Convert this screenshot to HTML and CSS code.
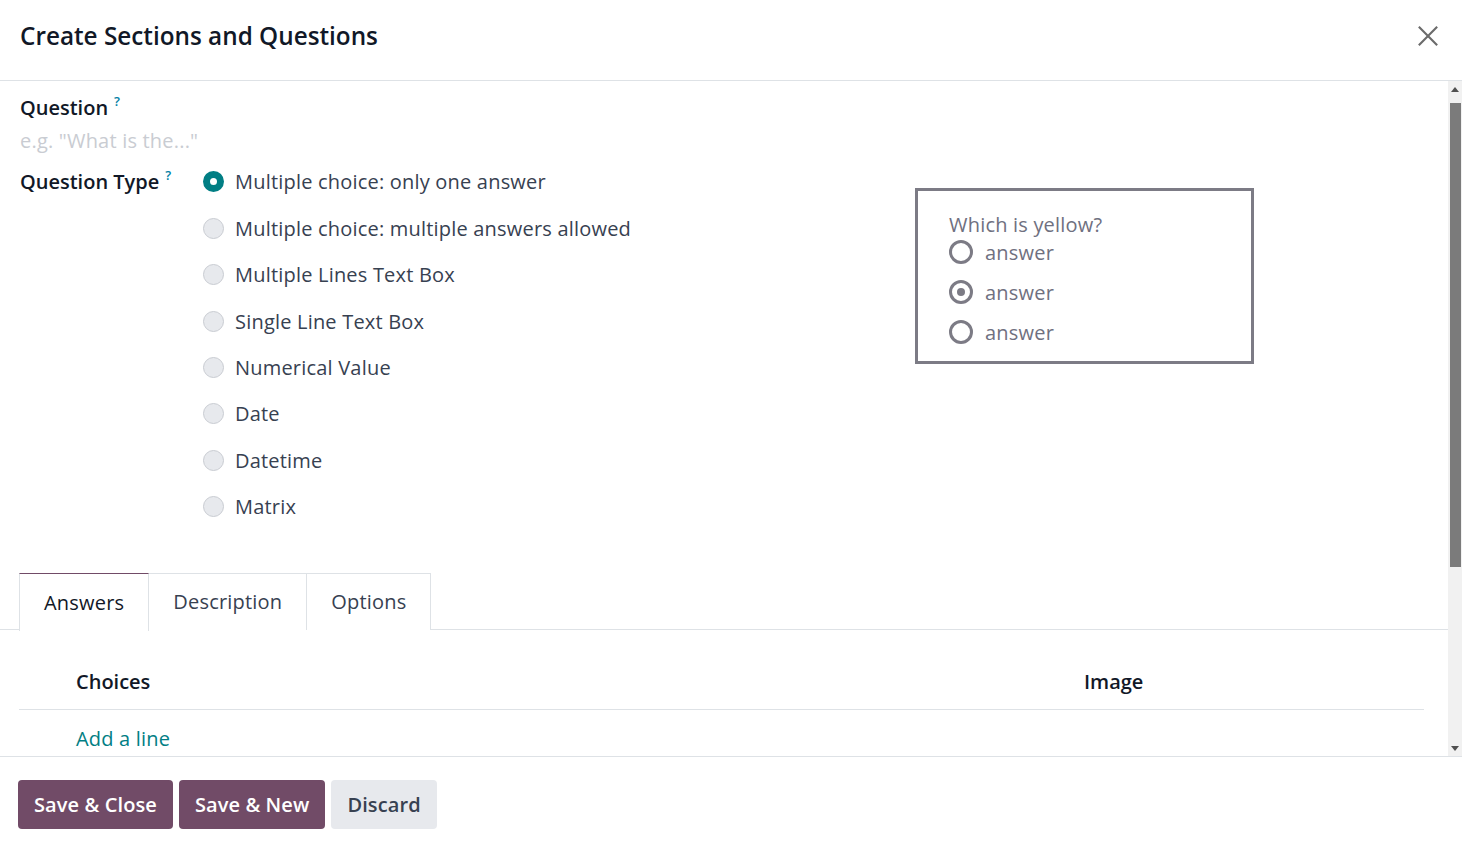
FILE: index.html
```html
<!DOCTYPE html>
<html>
<head>
<meta charset="utf-8">
<link rel="stylesheet" href="styles.css">
</head>
<body>
<div class="modal">
  <header class="modal-header">
    <h1 class="title">Create Sections and Questions</h1>
    <button class="close" aria-label="Close">
      <svg width="22" height="22" viewBox="0 0 24 24"><path d="M2 2 L22 22 M22 2 L2 22" stroke="#6b6b6b" stroke-width="2.3" fill="none"/></svg>
    </button>
  </header>
  <main class="modal-body">
    <div class="body-content">
      <div class="section">
        <div class="label">Question<sup class="help">?</sup></div>
        <div class="placeholder">e.g. "What is the..."</div>
        <div class="type-row">
          <div class="type-left">
            <div class="label type-label">Question Type<sup class="help">?</sup></div>
            <ul class="radios">
              <li><span class="radio checked"></span>Multiple choice: only one answer</li>
              <li><span class="radio"></span>Multiple choice: multiple answers allowed</li>
              <li><span class="radio"></span>Multiple Lines Text Box</li>
              <li><span class="radio"></span>Single Line Text Box</li>
              <li><span class="radio"></span>Numerical Value</li>
              <li><span class="radio"></span>Date</li>
              <li><span class="radio"></span>Datetime</li>
              <li><span class="radio"></span>Matrix</li>
            </ul>
          </div>
          <div class="preview">
            <div class="preview-q">Which is yellow?</div>
            <div class="preview-a first"><span class="pradio"></span>answer</div>
            <div class="preview-a"><span class="pradio on"></span>answer</div>
            <div class="preview-a"><span class="pradio"></span>answer</div>
          </div>
        </div>
      </div>
      <nav class="tabs">
        <div class="tab active">Answers</div>
        <div class="tab">Description</div>
        <div class="tab">Options</div>
      </nav>
      <div class="table">
        <div class="thead">
          <div class="col-handle"></div>
          <div class="col-choice">Choices</div>
          <div class="col-image">Image</div>
        </div>
        <div class="trow">
          <div class="col-handle"></div>
          <a class="add-line">Add a line</a>
        </div>
      </div>
    </div>
    <div class="scrollbar">
      <div class="sb-btn"><svg width="8" height="5" viewBox="0 0 8 5"><path d="M0 5 L4 0 L8 5 Z" fill="#505050"/></svg></div>
      <div class="sb-track"><div class="sb-thumb"></div></div>
      <div class="sb-btn"><svg width="8" height="5" viewBox="0 0 8 5"><path d="M0 0 L8 0 L4 5 Z" fill="#505050"/></svg></div>
    </div>
  </main>
  <footer class="modal-footer">
    <button class="btn primary">Save &amp; Close</button>
    <button class="btn primary">Save &amp; New</button>
    <button class="btn secondary">Discard</button>
  </footer>
</div>
</body>
</html>
```
FILE: styles.css
```css
* { box-sizing: border-box; }
html, body { margin: 0; padding: 0; }
body {
  font-family: "Open Sans", "Noto Sans", sans-serif;
  color: #374151;
  background: #fff;
  width: 1462px;
  height: 852px;
  overflow: hidden;
  font-size: 20px;
  letter-spacing: 0.2px;
}
.modal { display: flex; flex-direction: column; height: 852px; }
.modal-header {
  height: 81px;
  border-bottom: 1px solid #dee2e6;
  display: flex;
  align-items: center;
  justify-content: space-between;
  padding: 0 23px 10px 20px;
  flex: none;
}
.title {
  margin: 0;
  font-size: 24.3px;
  font-weight: 600;
  color: #111827;
  letter-spacing: 0;
}
.close { background: none; border: 0; padding: 0; margin-top: 2px; display: flex; }
.modal-body {
  height: 676px;
  flex: none;
  display: flex;
  border-bottom: 1px solid #dee2e6;
  overflow: hidden;
}
.body-content { flex: 1; min-width: 0; }
.scrollbar {
  width: 14px;
  flex: none;
  background: #f1f1f1;
  display: flex;
  flex-direction: column;
}
.sb-btn {
  height: 16px;
  display: flex;
  align-items: center;
  justify-content: center;
  flex: none;
}
.sb-track { flex: 1; padding: 6px 1px 0 2px; }
.sb-thumb { height: 464px; background: #7b7b7b; }
.section { padding: 13px 20px 0 20px; }
.label {
  font-size: 20px;
  font-weight: 600;
  color: #111827;
  line-height: 27px;
  height: 27px;
  letter-spacing: 0;
}
.help {
  color: #0180a5;
  font-size: 13px;
  font-weight: 600;
  margin-left: 6px;
  vertical-align: 9px;
  line-height: 0;
}
.placeholder {
  margin-top: 6px;
  line-height: 27px;
  color: #c9ccd2;
}
.type-row { display: flex; margin-top: 4px; }
.type-left { display: flex; width: 895px; }
.type-label { width: 183px; flex: none; margin-top: 10px; }
.radios { list-style: none; margin: 0; padding: 0; }
.radios li {
  height: 46.45px;
  display: flex;
  align-items: center;
  color: #374151;
  padding-top: 1px;
}
.radio {
  width: 21px; height: 21px;
  border-radius: 50%;
  background: #e7e9ed;
  border: 1px solid #c9ccd2;
  margin-right: 11px;
  flex: none;
}
.radio.checked {
  background: #fff;
  border: 7px solid #017e84;
}
.preview {
  margin-top: 30px;
  width: 339px;
  height: 176px;
  border: 3px solid #7c7b85;
  padding: 20px 0 0 31px;
  color: #6f7080;
}
.preview-q { line-height: 28px; }
.preview-a { display: flex; align-items: center; height: 40px; }
.preview-a.first { margin-top: -7px; }
.pradio {
  width: 24px; height: 24px;
  border: 3px solid #7c7b85;
  border-radius: 50%;
  margin-right: 12px;
  display: flex; align-items: center; justify-content: center;
}
.pradio.on::after {
  content: "";
  width: 8px; height: 8px;
  border-radius: 50%;
  background: #7c7b85;
}
.tabs {
  margin-top: 43px;
  display: flex;
  padding-left: 19px;
  border-bottom: 1px solid #dee2e6;
  height: 57px;
}
.tab {
  height: 57px;
  border: 1px solid #dee2e6;
  border-bottom: 0;
  padding: 0 24px;
  display: flex;
  align-items: center;
  color: #374151;
  background: #fff;
  margin-left: -1px;
}
.tab:first-child { margin-left: 0; }
.tab.active {
  border-top-color: #714b67;
  color: #111827;
  height: 58px;
  position: relative;
  z-index: 1;
}
.table { padding: 25px 24px 0 19px; }
.thead {
  display: flex;
  align-items: center;
  height: 55px;
  border-bottom: 1px solid #dee2e6;
  font-weight: 600;
  color: #111827;
  letter-spacing: 0;
}
.col-handle { width: 57px; flex: none; }
.col-choice { width: 1008px; }
.trow { display: flex; align-items: center; height: 56px; padding-top: 1px; }
.add-line { color: #017e84; }
.modal-footer {
  flex: none;
  display: flex;
  gap: 6px;
  padding: 23px 18px 0 18px;
}
.btn {
  height: 49px;
  border: 0;
  border-radius: 4px;
  font-family: "Open Sans", "Noto Sans", sans-serif;
  font-size: 20px;
  font-weight: 600;
  letter-spacing: 0.1px;
  padding: 0 16px;
}
.btn.primary { background: #714b67; color: #fff; }
.btn.secondary { background: #e7e9ed; color: #374151; }
```
